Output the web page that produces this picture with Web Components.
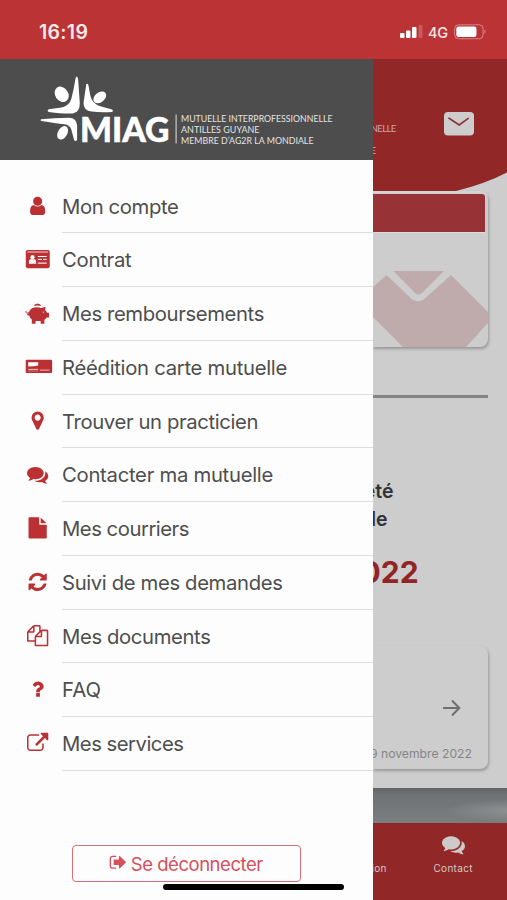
<!DOCTYPE html>
<html lang="fr">
<head>
<meta charset="utf-8">
<title>MIAG</title>
<style>
    html, body { margin: 0; height: 100%; }
    body {
        font-family: Inter, Roboto, sans-serif;
        background: #cdcdcd;
        overflow: hidden;
    }
</style>
</head>
<body>
<miag-app>
    <miag-status slot="status" time="16:19" network="4G"></miag-status>
    <miag-drawer slot="drawer">
        <miag-logo slot="logo"></miag-logo>
        <miag-item icon="user" fit="116.5">Mon compte</miag-item>
        <miag-item icon="idcard" fit="69.5">Contrat</miag-item>
        <miag-item icon="piggy" fit="202">Mes remboursements</miag-item>
        <miag-item icon="card" fit="225">Réédition carte mutuelle</miag-item>
        <miag-item icon="marker" fit="196">Trouver un practicien</miag-item>
        <miag-item icon="comments" fit="211">Contacter ma mutuelle</miag-item>
        <miag-item icon="file" fit="127">Mes courriers</miag-item>
        <miag-item icon="refresh" fit="220.5">Suivi de mes demandes</miag-item>
        <miag-item icon="files" fit="148.5">Mes documents</miag-item>
        <miag-item icon="question" fit="39">FAQ</miag-item>
        <miag-item icon="external" fit="121.5">Mes services</miag-item>
        <miag-logout slot="footer" fit="132">Se déconnecter</miag-logout>
    </miag-drawer>
    <miag-home slot="page">
        <miag-tab slot="tabs">ion</miag-tab>
        <miag-tab slot="tabs" icon="comments">Contact</miag-tab>
    </miag-home>
</miag-app>

<script>
(function(){
    //all the icons share a 1792 box, drawn at 21px in the menu
    const icons = {
        user: '<path transform="translate(0 -70)" d="M1536 1399q0 109-62.5 187t-150.5 78h-854q-88 0-150.5-78t-62.5-187q0-85 8.5-160.5t31.5-152 58.5-131 94-89 134.5-34.5q131 128 313 128t313-128q76 0 134.5 34.5t94 89 58.5 131 31.5 152 8.5 160.5zm-256-887q0 159-112.5 271.5t-271.5 112.5-271.5-112.5-112.5-271.5 112.5-271.5 271.5-112.5 271.5 112.5 112.5 271.5z"/>',
        marker: '<path transform="translate(0 -80)" d="M1152 640q0-106-75-181t-181-75-181 75-75 181 75 181 181 75 181-75 75-181zm256 0q0 109-33 179l-364 774q-16 33-47.5 52t-67.5 19-67.5-19-46.5-52l-365-774q-33-70-33-179 0-212 150-362t362-150 362 150 150 362z"/>',
        comments: '<path d="M1408 768q0 139-94 257t-256.5 186.5-353.5 68.5q-86 0-176-16-124 88-278 128-36 9-86 16h-3q-11 0-20.5-8t-11.5-21q-1-3-1-6.5t.5-6.5 2-6l2.5-5 3.5-5.5 4-5 4.5-5 4-4.5q5-6 23-25t26-29.5 22.5-29 25-38.5 20.5-44q-124-72-195-177t-71-224q0-139 94-257t256.5-186.5 353.5-68.5 353.5 68.5 256.5 186.5 94 257zm384 256q0 120-71 224.5t-195 176.5q10 24 20.5 44t25 38.5 22.5 29 26 29.5 23 25q1 1 4 4.5t4.5 5 4 5 3.5 5.5l2.5 5 2 6 .5 6.5-1 6.5q-3 14-13 22t-22 7q-50-7-86-16-154-40-278-128-90 16-176 16-271 0-472-132 58 4 88 4 161 0 309-45t264-129q125-92 192-212t67-254q0-77-23-152 129 71 204 178t75 230z"/>',
        file: '<path transform="translate(0 -70)" d="M1152 512v-472q22 14 36 28l408 408q14 14 28 36h-472zm-128 32q0 40 28 68t68 28h544v1056q0 40-28 68t-68 28h-1344q-40 0-68-28t-28-68v-1600q0-40 28-68t68-28h800v544z"/>',
        refresh: '<path transform="translate(0 -60)" d="M1639 1056q0 5-1 7-64 268-268 434.5t-478 166.5q-146 0-282.5-55t-243.5-157l-129 129q-19 19-45 19t-45-19-19-45v-448q0-26 19-45t45-19h448q26 0 45 19t19 45-19 45l-137 137q71 66 161 102t187 36q134 0 250-65t186-179q11-17 53-117 8-23 30-23h192q13 0 22.5 9.5t9.5 22.5zm25-800v448q0 26-19 45t-45 19h-448q-26 0-45-19t-19-45 19-45l138-138q-148-137-349-137-134 0-250 65t-186 179q-11 17-53 117-8 23-30 23h-199q-13 0-22.5-9.5t-9.5-22.5v-7q65-268 270-434.5t480-166.5q146 0 284 55.5t245 156.5l130-129q19-19 45-19t45 19 19 45z"/>',
        files: '<path transform="translate(0 -80)" d="M1696 384q40 0 68 28t28 68v1216q0 40-28 68t-68 28h-960q-40 0-68-28t-28-68v-288h-544q-40 0-68-28t-28-68v-672q0-40 20-88t48-76l408-408q28-28 76-48t88-20h416q40 0 68 28t28 68v328q68-40 128-40h416zm-544 213l-299 299h299v-299zm-640-384l-299 299h299v-299zm196 647l316-316v-416h-384v416q0 40-28 68t-68 28h-416v640h512v-256q0-40 20-88t48-76zm956 804v-1152h-384v416q0 40-28 68t-68 28h-416v640h896z"/>',
        question: '<path transform="translate(0 -40)" d="M1088 1256v240q0 16-12 28t-28 12h-240q-16 0-28-12t-12-28v-240q0-16 12-28t28-12h240q16 0 28 12t12 28zm316-600q0 54-15.5 101t-35 76.5-55 59.5-57.5 43.5-61 35.5q-41 23-68.5 65t-27.5 67q0 17-12 32.5t-28 15.5h-240q-15 0-25.5-18.5t-10.5-37.5v-45q0-83 65-156.5t143-108.5q59-27 84-56t25-76q0-42-46.5-74t-107.5-32q-65 0-108 29-35 25-107 115-13 16-31 16-12 0-25-8l-164-125q-13-10-15.5-25t5.5-28q160-266 464-266 80 0 161 31t146 83 106 127.5 41 158.5z"/>',
        external: '<path transform="translate(0 -20)" d="M1408 928v320q0 119-84.5 203.5t-203.5 84.5h-832q-119 0-203.5-84.5t-84.5-203.5v-832q0-119 84.5-203.5t203.5-84.5h704q14 0 23 9t9 23v64q0 14-9 23t-23 9h-704q-66 0-113 47t-47 113v832q0 66 47 113t113 47h832q66 0 113-47t47-113v-320q0-14 9-23t23-9h64q14 0 23 9t9 23zm384-864v512q0 26-19 45t-45 19-45-19l-176-176-652 652q-10 10-23 10t-23-10l-114-114q-10-10-10-23t10-23l652-652-176-176q-19-19-19-45t19-45 45-19h512q26 0 45 19t19 45z"/>',
        signout: '<path d="M704 1440q0 4 1 20t.5 26.5-3 23.5-10 19.5-20.5 6.5h-320q-119 0-203.5-84.5t-84.5-203.5v-704q0-119 84.5-203.5t203.5-84.5h320q13 0 22.5 9.5t9.5 22.5q0 4 1 20t.5 26.5-3 23.5-10 19.5-20.5 6.5h-320q-66 0-113 47t-47 113v704q0 66 47 113t113 47h312l11.5 1 11.5 3 8 5.5 7 9 2 13.5zm928-544q0 26-19 45l-544 544q-19 19-45 19t-45-19-19-45v-288h-448q-26 0-45-19t-19-45v-384q0-26 19-45t45-19h448v-288q0-26 19-45t45-19 45 19l544 544q19 19 19 45z"/>',
        //these three are wider than the box, in 1/84 px
        idcard: `<g transform="scale(84)"><rect x="-1.2" y="1" width="24" height="18.2" rx="1.8"/>
            <g fill="#fff"><rect x=".4" y="2.5" width="20.8" height="1" opacity=".8"/><circle cx="5.5" cy="8.2" r="2.1"/>
            <path d="M1.900 14.900v-2.400q0-2.200 2-2.200h3.200q2 0 2 2.200v2.400z"/>
            <rect x="10.900" y="7" width="8.800" height="1"/><rect x="10.900" y="9.900" width="4" height="1"/><rect x="16.100" y="9.900" width="3.600" height="1"/><rect x="10.900" y="13.600" width="8.800" height="1.100"/></g></g>`,
        piggy: `<g transform="scale(84)"><path d="M6.8 3.100a4 4 0 0 1 7.500 0q-3.700-1-7.500 0z"/>
            <path d="M-.8 7.900q-1 1.300.2 2 1.400.4 2.400-.6" fill="none" stroke="#bb3033" stroke-width=".9"/>
            <path d="M1.900 10.100Q2.600 5.500 6.900 4.500q4-.7 7.300.5l4.500-1.300-.6 3.400q1.300 1.200 1.900 2.600h2.100v4.800h-2.300q-.9 1.400-2.400 2.200v4.100h-3.700v-2.700H8.600v2.700H4.800v-4.200q-2-1.600-2.600-4.200-1.600.2-2.500-1.500z"/>
            <circle cx="16.200" cy="9.100" r=".6" fill="#fff"/></g>`,
        card: `<g transform="scale(84)"><rect x="-1.300" y="2.800" width="26.500" height="13.200" rx="1.200"/>
            <g fill="#fff"><path d="M1.200 5.200H11.200V8.400Q7 9.200 1.200 9.600z"/><rect x="1.200" y="11.900" width="10" height=".9" opacity=".8"/><rect x="1.200" y="13.700" width="10" height=".6" opacity=".5"/><rect x="12.900" y="12.700" width="9.600" height=".8" opacity=".85"/></g></g>`
    };
    const icon = (name, size) =>
        `<svg class="icon" width="${size}" height="${size}" viewBox="0 0 1792 1792" fill="currentColor" overflow="visible">${icons[name]}</svg>`;

    //adjust the tracking so that the label takes the wanted width
    const fit = (el, width, count) => {
        const delta = width - el.getBoundingClientRect().width;
        el.style.letterSpacing = (delta / count) + 'px';
    };

    class MiagElement extends HTMLElement {
        constructor()
        {
            super();
            this.attachShadow({mode:'open'});
        }
        connectedCallback(){
            this.shadowRoot.innerHTML = this.render();
            const label = this.shadowRoot.querySelector('.label');
            if(label && this.hasAttribute('fit')){
                fit(label, Number(this.getAttribute('fit')), this.textContent.trim().length);
            }
        }
    }

    class MiagApp extends MiagElement {
        render(){
            return `
            <style>
                :host { display:grid; grid-template: 59px 841px / 372.6px 134.4px; width:507px; height:900px; overflow:hidden; position:relative; }
                .status { grid-column: 1 / 3; }
                .page { overflow:hidden; }
                .home { position:absolute; left:163px; top:884px; width:181px; height:6px; border-radius:3px; background:#000; }
            </style>
            <div class="status"><slot name="status"></slot></div>
            <slot name="drawer"></slot>
            <div class="page"><slot name="page"></slot></div>
            <div class="home"></div>`;
        }
    }

    class MiagStatus extends MiagElement {
        render(){
            return `
            <style>
                :host { display:flex; box-sizing:border-box; height:59px; padding:5px 20px 0 39px; align-items:center; background:#bb3334; color:#fbeaea; }
                .time { flex:1; font-size:19.5px; font-weight:600; letter-spacing:.3px; padding-bottom:1px; }
                .net { font-size:14.5px; font-weight:500; margin:0 6px 0 5px; letter-spacing:-.2px; }
                svg { display:block; }
            </style>
            <span class="time">${this.getAttribute('time')}</span>
            <svg width="23" height="14" fill="#fff"><rect x="0" y="8" width="4.500" height="5" rx="1"/><rect x="6" y="5.500" width="4.500" height="7.500" rx="1"/><rect x="12" y="2" width="4.500" height="11" rx="1"/><rect x="18.500" y="0" width="4" height="13" rx="1" opacity=".2"/></svg>
            <span class="net">${this.getAttribute('network')}</span>
            <svg width="33" height="17"><rect x=".6" y=".8" width="28.500" height="14" rx="4" fill="none" stroke="#fff" stroke-opacity=".4"/><rect x="2.300" y="2.500" width="20.200" height="10.600" rx="2.300" fill="#fff"/><path d="M30.500 5.500q2 2.200 0 4.600z" fill="#fff" opacity=".5"/></svg>`;
        }
    }

    class MiagLogo extends MiagElement {
        render(){
            return `
            <style>
                :host { display:block; height:100.5px; margin-bottom:.5px; background:#4d4d4d; }
                svg { display:block; font-family: Lato, sans-serif; }
            </style>
            <svg width="373" height="100" viewBox="0 59 373 100" fill="#fff">
                <ellipse cx="61.700" cy="94.300" rx="6.500" ry="8.200" transform="rotate(-34 61.700 94.300)"/>
                <ellipse cx="99.800" cy="97.400" rx="4.900" ry="7.200" transform="rotate(52 99.800 97.400)"/>
                <ellipse cx="62.600" cy="132.800" rx="4.700" ry="7.300" transform="rotate(30 62.600 132.800)"/>
                <path d="M77 76.500q1.200 1 1.300 5l1.500 21.500q.3 9.500-7 10.500-9 .5-24-1.500-2.400-1.300 0-2.700l11-1.600q8.500-.6 11.500-8.700Q73.700 90 75.700 77.500z"/>
                <path d="M86.300 84q1.800-1.200 2.300 2l1.600 9q1.600 9 11 11.600l11 2.800q1.500 1.300 0 2.500-11 .7-20.700-.3-8-1-8-8.600z"/>
                <path d="M41 119.300q12.500-1.400 28-1.500 7.500.3 8.100 7.700v14.500q-1.600 1.800-3 0l-2.700-10.300q-1.500-5-7-5.500-9-.9-23-3.200-1.700-.8-.4-1.700z"/>
                <text x="80" y="142" font-size="34" font-weight="900" textLength="89.500" lengthAdjust="spacingAndGlyphs" stroke="#fff" stroke-width=".5">MIAG</text>
                <rect x="175.500" y="114.500" width="1.200" height="29" opacity=".7"/>
                <g font-size="9.800" fill="#e4e4e4">
                    <text x="181" y="121.700" textLength="151.500" lengthAdjust="spacingAndGlyphs">MUTUELLE INTERPROFESSIONNELLE</text>
                    <text x="181" y="132.500" textLength="78.500" lengthAdjust="spacingAndGlyphs">ANTILLES GUYANE</text>
                    <text x="181" y="143.700" textLength="132.500" lengthAdjust="spacingAndGlyphs">MEMBRE D’AG2R LA MONDIALE</text>
                </g>
            </svg>`;
        }
    }

    class MiagDrawer extends MiagElement {
        render(){
            return `
            <style>
                :host { display:flex; flex-direction:column; background:#fdfdfd; }
                nav { flex:1; padding-top:19.5px; }
                footer { padding:0 71.6px 18px 72px; }
            </style>
            <slot name="logo"></slot>
            <nav><slot></slot></nav>
            <footer><slot name="footer"></slot></footer>`;
        }
    }

    class MiagItem extends MiagElement {
        render(){
            return `
            <style>
                :host { display:grid; grid-template-columns:62px 1fr; height:53.75px; color:#4e4e4e; font-size:20.3px; }
                .pic { display:flex; align-items:center; padding-left:26.7px; color:#bb3033; }
                .text { display:flex; align-items:center; border-bottom:1px solid #dedede; box-sizing:border-box; white-space:nowrap; padding-top:.5px; }
            </style>
            <div class="pic">${icon(this.getAttribute('icon'), 21.3)}</div>
            <div class="text"><span class="label"><slot></slot></span></div>`;
        }
    }

    class MiagLogout extends MiagElement {
        render(){
            return `
            <style>
                :host { display:flex; box-sizing:border-box; height:37px; align-items:center; justify-content:center; gap:3px;
                    border:1.5px solid #d8707a; border-radius:4px; color:#d5505c; font-size:18.5px; white-space:nowrap; }
                .icon { margin:-2px 0 0 -1px; }
            </style>
            ${icon('signout', 18.5)}
            <span class="label"><slot></slot></span>`;
        }
    }

    //the home page, dimmed behind the drawer
    class MiagHome extends MiagElement {
        render(){
            return `
            <style>
                :host { display:flex; flex-direction:column; height:841px; background:#cdcdcd; }
                .head { display:grid; height:132px; }
                .head > * { grid-area:1 / 1; }
                .bar { display:flex; justify-content:space-between; padding:53px 33.4px 0 0; }
                .brand { font:9.8px/22px Lato, sans-serif; color:#c9a5a5; margin-top:5px; letter-spacing:-.75px; margin-left:-2px; }
                .brand div { height:22px; width:40px; }
                .card { margin-right:19px; border-radius:0 8px 8px 0; box-shadow:1px 2px 3px #7779; overflow:hidden; }
                .mail { height:156px; border-top:2px solid #d4d2d2; box-sizing:border-box; }
                .mail i { display:block; height:39px; background:#973336; border-radius:0 3px 0 0; border-bottom:1px solid #dcdcdc; box-sizing:border-box; margin:1px 3px 0 0; }
                .mail svg { display:block; overflow:visible; }
                hr { width:115px; height:2.5px; margin:48px 0 0; border:0; background:#838383; }
                .clip { white-space:nowrap; display:flex; justify-content:flex-end; }
                .t1 { width:21px; font-size:19.5px; line-height:28px; font-weight:600; color:#333; }
                .t2 { width:46px; font-size:30px; line-height:40px; font-weight:700; color:#922426; margin-top:19px; }
                .news { display:flex; flex-direction:column; height:123px; margin-top:54px; box-sizing:border-box; align-items:flex-end; padding:53px 16px 0 0; }
                .news svg { margin-right:11px; }
                .date { font-size:12.2px; line-height:16px; color:#858585; margin-top:29px; width:99px; }
                .photo { margin-top:auto; height:35px; flex:none; background:radial-gradient(ellipse at 105% 65%, #8d9192, transparent 35%), linear-gradient(#626465, #707375 20%, #7b7e80); }
                .tabs { display:flex; flex:none; height:77px; background:#922727; }
            </style>
            <div class="head">
                <svg width="135" height="134"><path d="M0 0H135V113Q112 125 83 132H0z" fill="#922727"/></svg>
                <div class="bar">
                    <div class="brand"><div>NELLE</div><div>E</div></div>
                    <svg width="30" height="25"><rect x="0" y="0" width="30" height="23.500" rx="4" fill="#cdcdcd"/><path d="M5 6.200l10.200 6.800 9-6.600" fill="none" stroke="#8c3437" stroke-width="1.700" stroke-linecap="round"/></svg>
                </div>
            </div>
            <div class="card mail">
                <i></i>
                <svg width="115" height="114">
                    <path d="M0 54L13.500 42 37 64.500Q45 72 53 64.500L78 42 115 79H116V89L93 114H30L0 84z" fill="#bfabac"/>
                    <path d="M20.500 38H71L49 60Q45.500 63 42 60z" fill="#bfabac"/>
                </svg>
            </div>
            <hr>
            <div class="clip t1" style="margin-top:79px">été</div>
            <div class="clip t1" style="width:15px">le</div>
            <div class="clip t2">022</div>
            <div class="card news">
                <svg width="19" height="18" fill="none" stroke="#707070" stroke-width="2"><path d="M1 9H17M10 1.500L17.300 9 10 16.500"/></svg>
                <div class="clip date">9 novembre 2022</div>
            </div>
            <div class="photo"></div>
            <div class="tabs"><slot name="tabs"></slot></div>`;
        }
    }

    class MiagTab extends MiagElement {
        render(){
            const name = this.getAttribute('icon');
            return `
            <style>
                :host { display:flex; flex-direction:column; align-items:center; color:#cfcaca; font-size:10px; letter-spacing:.3px; padding-top:10px; box-sizing:border-box; width:${name ? 109 : 27}px; }
                .pic { height:25px; }
                .text { line-height:20px; ${name ? '' : 'align-self:flex-start; margin-left:-1px;'} }
            </style>
            <div class="pic">${name ? icon(name, 23) : ''}</div>
            <span class="text"><slot></slot></span>`;
        }
    }

    customElements.define('miag-app', MiagApp);
    customElements.define('miag-status', MiagStatus);
    customElements.define('miag-logo', MiagLogo);
    customElements.define('miag-drawer', MiagDrawer);
    customElements.define('miag-item', MiagItem);
    customElements.define('miag-logout', MiagLogout);
    customElements.define('miag-home', MiagHome);
    customElements.define('miag-tab', MiagTab);
})();
</script>
</body>
</html>
